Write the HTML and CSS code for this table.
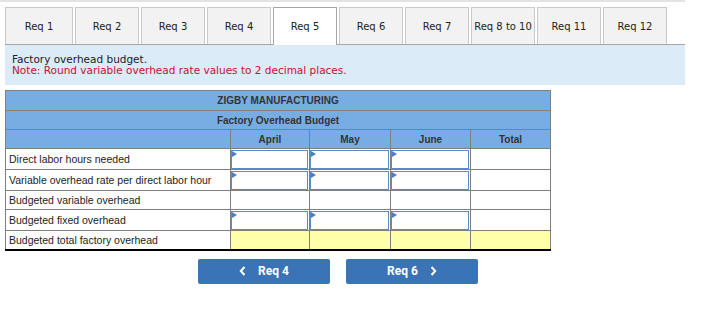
FILE: index.html
```html
<html lang="en">
<head>
    <meta charset="UTF-8">
    <title>Factory overhead budget</title>
    <link rel="stylesheet" href="styles.css">
</head>
<body>
    <div class="wrap">
        <div class="top-line"></div>

        <div class="tabs">
            <div class="tab first">Req 1</div>
            <div class="tab">Req 2</div>
            <div class="tab">Req 3</div>
            <div class="tab">Req 4</div>
            <div class="tab active">Req 5</div>
            <div class="tab">Req 6</div>
            <div class="tab">Req 7</div>
            <div class="tab">Req 8 to 10</div>
            <div class="tab">Req 11</div>
            <div class="tab">Req 12</div>
        </div>

        <div class="panel">
            <div>Factory overhead budget.</div>
            <div class="note">Note: Round variable overhead rate values to 2 decimal places.</div>
        </div>

        <table class="budget">
            <colgroup>
                <col class="col-label">
                <col class="col-april">
                <col class="col-may">
                <col class="col-june">
                <col class="col-total">
            </colgroup>
            <tr class="head">
                <td colspan="5">ZIGBY MANUFACTURING</td>
            </tr>
            <tr class="head">
                <td colspan="5">Factory Overhead Budget</td>
            </tr>
            <tr class="head">
                <td class="label"></td>
                <td>April</td>
                <td>May</td>
                <td>June</td>
                <td>Total</td>
            </tr>
            <tr>
                <td class="label">Direct labor hours needed</td>
                <td class="entry"><div class="box"></div></td>
                <td class="entry"><div class="box"></div></td>
                <td class="entry"><div class="box"></div></td>
                <td></td>
            </tr>
            <tr>
                <td class="label">Variable overhead rate per direct labor hour</td>
                <td class="entry"><div class="box"></div></td>
                <td class="entry"><div class="box"></div></td>
                <td class="entry"><div class="box"></div></td>
                <td></td>
            </tr>
            <tr class="sum">
                <td class="label">Budgeted variable overhead</td>
                <td></td>
                <td></td>
                <td></td>
                <td></td>
            </tr>
            <tr>
                <td class="label">Budgeted fixed overhead</td>
                <td class="entry"><div class="box"></div></td>
                <td class="entry"><div class="box"></div></td>
                <td class="entry"><div class="box"></div></td>
                <td></td>
            </tr>
            <tr class="sum total">
                <td class="label">Budgeted total factory overhead</td>
                <td class="yellow"></td>
                <td class="yellow"></td>
                <td class="yellow"></td>
                <td class="yellow"></td>
            </tr>
        </table>

        <div class="nav">
            <button class="nav-btn">
                <svg class="chev" width="7" height="10" viewBox="0 0 7 10"><path d="M5.5 1 L1.8 5 L5.5 9" fill="none" stroke="#fff" stroke-width="2"/></svg>
                Req 4
            </button>
            <button class="nav-btn">
                Req 6
                <svg class="chev right" width="7" height="10" viewBox="0 0 7 10"><path d="M1.5 1 L5.2 5 L1.5 9" fill="none" stroke="#fff" stroke-width="2"/></svg>
            </button>
        </div>
    </div>
</body>
</html>
```

FILE: styles.css
```css
body {
    margin: 0;
    background: #fff;
    font-family: 'Liberation Sans', Arial, sans-serif;
    color: #333;
}
.wrap {
    width: 680px;
    padding-left: 5px;
}
.top-line {
    height: 2px;
    background: #e3e3e3;
    margin-left: -5px;
    width: 685px;
}

/* Вкладки */
.tabs {
    display: flex;
    gap: 2px;
    margin-top: 5px;
    border-bottom: 1px solid #a6a6a6;
    height: 37px;
}
.tab {
    width: 62px;
    height: 36px;
    background: #f2f2f2;
    border: 1px solid #c9c9c9;
    border-bottom: none;
    font-family: 'DejaVu Sans', Verdana, sans-serif;
    font-size: 10px;
    color: #222;
    display: flex;
    align-items: center;
    justify-content: center;
    white-space: nowrap;
}
.tab.first {
    width: 66px;
}
.tab.active {
    background: #fff;
    border-color: #a6a6a6;
    height: 37px;
    margin-bottom: -1px;
}

/* Пояснение */
.panel {
    background: #dbebf8;
    height: 40px;
    padding: 9px 0 0 7px;
    box-sizing: border-box;
    font-family: 'DejaVu Sans', Verdana, sans-serif;
    font-size: 10.5px;
    line-height: 11px;
    color: #222;
}
.panel .note {
    color: #c8102e;
}

/* Таблица бюджета */
.budget {
    margin-top: 5px;
    border-collapse: collapse;
    width: 545px;
    font-size: 10px;
    table-layout: fixed;
}
.col-label { width: 225px; }
.col-april { width: 79px; }
.col-may { width: 81px; }
.col-june { width: 80px; }
.col-total { width: 80px; }
.budget td {
    border: 1px solid #7f7f7f;
    height: 19px;
    padding: 0;
    text-align: center;
    white-space: nowrap;
}
.budget td.label {
    text-align: left;
    padding-left: 3px;
    font-size: 10.5px;
    color: #222;
}
.budget .head td {
    background: #78ade3;
    font-weight: bold;
    color: #333;
}
.budget .head:first-child td {
    height: 20px;
}
.budget .sum td {
    border-top: 1px solid #000;
}
.budget .total td {
    border-bottom: 2px solid #000;
}
.budget .yellow {
    background: #ffffaa;
}
.budget td.entry {
    padding: 1px 0 0 0;
}
.box {
    position: relative;
    height: 17px;
    margin: 0 1px 0 0;
    border: 1px solid #5b8bc6;
    background: #fff;
}
.box::before {
    content: '';
    position: absolute;
    left: 0;
    top: 0;
    border-left: 5px solid #4a7fc8;
    border-top: 3px solid transparent;
    border-bottom: 3px solid transparent;
}

/* Навигация */
.nav {
    display: flex;
    gap: 16px;
    margin-top: 8px;
    padding-left: 193px;
}
.nav-btn {
    width: 132px;
    height: 25px;
    background: #3a73b6;
    border: none;
    border-radius: 2px;
    color: #fff;
    font-family: Roboto, sans-serif;
    font-weight: bold;
    font-size: 12px;
    cursor: pointer;
    display: flex;
    align-items: center;
    justify-content: center;
}
.chev {
    margin-right: 12px;
}
.chev.right {
    margin-right: 0;
    margin-left: 12px;
}
```
